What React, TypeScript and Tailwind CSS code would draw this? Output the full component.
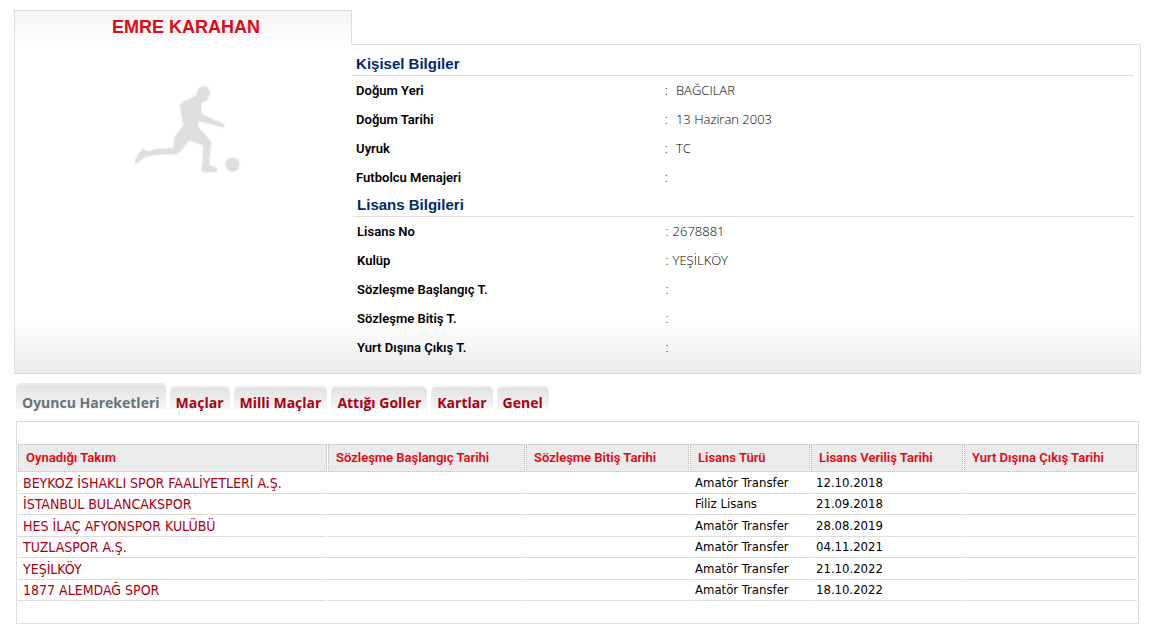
import React from "react";

interface InfoRow {
  label: string;
  value: string;
}

interface Transfer {
  team: string;
  type: string;
  date: string;
}

const personal: InfoRow[] = [
  { label: "Doğum Yeri", value: "BAĞCILAR" },
  { label: "Doğum Tarihi", value: "13 Haziran 2003" },
  { label: "Uyruk", value: "TC" },
  { label: "Futbolcu Menajeri", value: "" },
];

const license: InfoRow[] = [
  { label: "Lisans No", value: "2678881" },
  { label: "Kulüp", value: "YEŞİLKÖY" },
  { label: "Sözleşme Başlangıç T.", value: "" },
  { label: "Sözleşme Bitiş T.", value: "" },
  { label: "Yurt Dışına Çıkış T.", value: "" },
];

const tabs = ["Oyuncu Hareketleri", "Maçlar", "Milli Maçlar", "Attığı Goller", "Kartlar", "Genel"];

const columns = [
  { title: "Oynadığı Takım", width: "w-[309px]" },
  { title: "Sözleşme Başlangıç Tarihi", width: "w-[197px]" },
  { title: "Sözleşme Bitiş Tarihi", width: "w-[163px]" },
  { title: "Lisans Türü", width: "w-[120px]" },
  { title: "Lisans Veriliş Tarihi", width: "w-[152px]" },
  { title: "Yurt Dışına Çıkış Tarihi", width: "" },
];

const transfers: Transfer[] = [
  { team: "BEYKOZ İSHAKLI SPOR FAALİYETLERİ A.Ş.", type: "Amatör Transfer", date: "12.10.2018" },
  { team: "İSTANBUL BULANCAKSPOR", type: "Filiz Lisans", date: "21.09.2018" },
  { team: "HES İLAÇ AFYONSPOR KULÜBÜ", type: "Amatör Transfer", date: "28.08.2019" },
  { team: "TUZLASPOR A.Ş.", type: "Amatör Transfer", date: "04.11.2021" },
  { team: "YEŞİLKÖY", type: "Amatör Transfer", date: "21.10.2022" },
  { team: "1877 ALEMDAĞ SPOR", type: "Amatör Transfer", date: "18.10.2022" },
];

const PlayerSilhouette: React.FC = () => (
  <svg viewBox="0 0 130 110" className="w-[130px] h-[110px] drop-shadow-[0_0_1px_#d8d8d8]" fill="#dedede" aria-hidden="true">
    <path d="M83.5 11.6c3.4 0 6 2.6 5.8 6.2-.2 3.800-2 7.600-5 8.600-1.800.5-3.300.1-3.300 1.600.2 3.800-.3 7 .3 11 5.200 3.500 9.500 4.300 14.600 7.500 3.300.2 6 .8 8.800 4.600l-1.600.7c-2.500.2-4.600-.2-6.800-1.200-2-.8-3.300-1.300-5-1.600l-13-3.600c-.8 3-.8 5.400.2 7.800 4.800 4.600 9.500 9.200 12.300 14.200-.8 8-2 15.600-2 22.800 2.700 1.500 5 2.200 8.400 3.400-.3 1.800-.6 3-1.600 3.200h-13c-.8-2.500-.5-4.500.2-7 .5-6.500.4-14 .8-20-5.500-1.800-10-2-13.600-5-4.200 3-6 8-11.800 13.200-1.300.9-3.500.7-5.400.8-8.300.2-16.500.8-24 1.700-5 1.600-8.800 4.500-13.300 8-1-4 3.500-11 8.200-14.500 1 1.800 3 2.600 5.200 2.400 7.500-2.400 15.600-2.600 24.800-2.800.5-5 .7-8.800 2-11.800 2-3.400 6-7.500 8-12-1.300-5.500-1.700-12.500-3.600-18.600.5-3 3.400-4.200 7.500-6.200 3.400-1.600 7.200-2.400 9.500-5 .3-4.500 2.600-8.400 6.400-8.400z" />
    <circle cx="112.500" cy="89.500" r="6.600" />
  </svg>
);

const SectionTitle: React.FC<{ children: React.ReactNode }> = ({ children }) => (
  <h2 className="h-[25px] border-b border-[#dddddd] pl-1 text-[15px] leading-[26px] font-bold text-[#002a6c]">{children}</h2>
);

const InfoList: React.FC<{ rows: InfoRow[]; gap: string }> = ({ rows, gap }) => (
  <dl className="text-[13px] leading-[29px]">
    {rows.map((row) => (
      <div key={row.label} className="grid grid-cols-[2fr_3fr]">
        <dt className="pl-1 font-['Roboto',sans-serif] font-semibold text-black">{row.label}</dt>
        <dd className={`flex font-['Open_Sans',sans-serif] font-light text-black ${gap}`}>
          <span>:</span>
          <span>{row.value}</span>
        </dd>
      </div>
    ))}
  </dl>
);

export default function App() {
  return (
    <main className="bg-white pt-[10px] pr-[17px] pb-4 pl-[14px] font-['Liberation_Sans',Arial,sans-serif]">
      <section className="flex border-b border-[#dddddd] bg-[linear-gradient(to_top,#ebebeb,#ffffff_54px)]">
        <div className="w-[30%] border-l border-[#dddddd]">
          <h1 className="h-[35px] border-t border-r border-[#dddddd] bg-linear-to-b from-[#f4f4f4] to-white pl-1.5 text-center text-[18px] leading-8 font-bold text-[#e30613]">
            EMRE KARAHAN
          </h1>
          <div className="flex justify-center pt-[30px] pl-0.5">
            <PlayerSilhouette />
          </div>
        </div>

        <div className="mt-[34px] flex-1 border-t border-r border-[#dddddd] pt-[6px] pr-[6px] pb-[11px]">
          <SectionTitle>Kişisel Bilgiler</SectionTitle>
          <InfoList rows={personal} gap="gap-2" />
          <div className="pl-px">
            <SectionTitle>Lisans Bilgileri</SectionTitle>
            <InfoList rows={license} gap="gap-1" />
          </div>
        </div>
      </section>

      <nav className="mt-[9px] flex items-end gap-1 pl-0.5 font-['Open_Sans',Tahoma,sans-serif]">
        {tabs.map((tab, i) => (
          <button
            key={tab}
            type="button"
            className={`rounded-t-[5px] border-t-2 border-[#ebebeb] bg-linear-to-b from-[#e2e2e2] to-[#f6f6f6] px-[6px] text-[14px] leading-4 font-bold ${
              i === 0 ? "h-[26px] pt-[10px] text-[#67727a]" : "h-[23px] pt-[7px] text-[#a90011]"
            }`}
          >
            {tab}
          </button>
        ))}
      </nav>

      <section className="mt-3 mr-0.5 ml-0.5 border border-[#dddddd] pt-[22px] pb-[22px]">
        <table className="w-full table-fixed border-separate border-spacing-x-px border-spacing-y-0 text-left">
          <thead>
            <tr className="h-7 font-['Roboto',sans-serif] text-[13px] leading-5 text-[#e30613]">
              {columns.map((col) => (
                <th
                  key={col.title}
                  className={`border border-dotted border-[#bbbbbb] bg-[#ebebeb] py-0 pl-[7px] font-semibold whitespace-nowrap ${col.width}`}
                >
                  {col.title}
                </th>
              ))}
            </tr>
          </thead>
          <tbody className="font-['DejaVu_Sans_Condensed',Tahoma,sans-serif] text-[13px] leading-5 text-black">
            {transfers.map((t) => (
              <tr key={t.team} className="odd:h-[22px] even:h-[21px]">
                <td className="border-b border-[#dddddd] py-0 pl-[5px] text-[14px] whitespace-nowrap">
                  <a href="#" className="text-[#a90011]">
                    {t.team}
                  </a>
                </td>
                <td className="border-b border-[#dddddd]" />
                <td className="border-b border-[#dddddd]" />
                <td className="border-b border-[#dddddd] py-0 pl-[5px] whitespace-nowrap">{t.type}</td>
                <td className="border-b border-[#dddddd] py-0 pl-[5px] whitespace-nowrap">{t.date}</td>
                <td className="border-b border-[#dddddd]" />
              </tr>
            ))}
          </tbody>
        </table>
      </section>
    </main>
  );
}
